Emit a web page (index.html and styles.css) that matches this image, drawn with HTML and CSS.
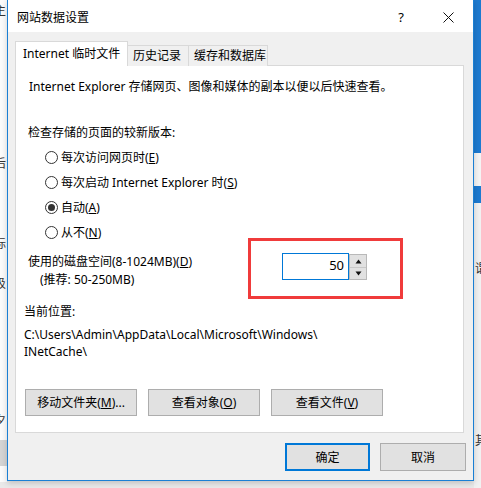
FILE: index.html
```html
<!DOCTYPE html>
<html lang="zh-CN">
<head>
<meta charset="utf-8">
<title>网站数据设置</title>
<link rel="stylesheet" href="styles.css">
</head>
<body>
<div class="desktop">
  <div class="bgwin bg-left">
    <span class="bgchar c1">主</span>
    <span class="bgchar c2">后</span>
    <span class="bgchar c3">标</span>
    <span class="bgchar c4">汲</span>
    <span class="bgchar c5">夕</span>
    <div class="bg-left-bar"></div>
  </div>
  <div class="bgwin bg-right">
    <div class="blue b1"></div>
    <div class="gap"></div>
    <div class="blue b2"></div>
    <span class="bgchar r1">谓</span>
    <span class="bgchar r2">其</span>
  </div>

  <div class="dialog">
    <div class="titlebar">
      <span class="title">网站数据设置</span>
      <span class="help">?</span>
      <span class="close"><svg width="11" height="11" viewBox="0 0 11 11"><path d="M0.5 0.5 L10.5 10.5 M10.5 0.5 L0.5 10.5" stroke="#111" stroke-width="1" fill="none"/></svg></span>
    </div>
    <div class="content">
      <div class="tabs">
        <div class="tab active">Internet 临时文件</div>
        <div class="tab">历史记录</div>
        <div class="tab">缓存和数据库</div>
      </div>
      <div class="panel">
        <p class="intro">Internet Explorer 存储网页、图像和媒体的副本以便以后快速查看。</p>
        <p class="check-label">检查存储的页面的较新版本:</p>
        <div class="radios">
          <div class="radio-row"><span class="radio"></span><span>每次访问网页时(<u>E</u>)</span></div>
          <div class="radio-row"><span class="radio"></span><span>每次启动 Internet Explorer 时(<u>S</u>)</span></div>
          <div class="radio-row"><span class="radio checked"></span><span>自动(<u>A</u>)</span></div>
          <div class="radio-row"><span class="radio"></span><span>从不(<u>N</u>)</span></div>
        </div>
        <div class="disk-row">
          <div class="disk-label">
            <div>使用的磁盘空间(8-1024MB)(<u>D</u>)</div>
            <div class="rec">(推荐: 50-250MB)</div>
          </div>
          <div class="spin">
            <div class="spin-input">50</div>
            <div class="spin-btns">
              <span class="spin-btn"><svg width="7" height="5" viewBox="0 0 7 5"><path d="M3.5 0.5 L6.5 4.5 L0.5 4.5 Z" fill="#111"/></svg></span>
              <span class="spin-btn"><svg width="7" height="5" viewBox="0 0 7 5"><path d="M0.5 0.5 L6.5 0.5 L3.5 4.5 Z" fill="#111"/></svg></span>
            </div>
          </div>
        </div>
        <p class="loc-label">当前位置:</p>
        <p class="path">C:\Users\Admin\AppData\Local\Microsoft\Windows\<br>INetCache\</p>
        <div class="actions">
          <button class="btn">移动文件夹(<u>M</u>)...</button>
          <button class="btn">查看对象(<u>O</u>)</button>
          <button class="btn">查看文件(<u>V</u>)</button>
        </div>
        <div class="highlight"></div>
      </div>
      <div class="footer">
        <button class="btn dlg-btn primary">确定</button>
        <button class="btn dlg-btn">取消</button>
      </div>
    </div>
  </div>
</div>
</body>
</html>
```
FILE: styles.css
```css
* { box-sizing: border-box; }
html, body { margin: 0; padding: 0; }
body {
  width: 481px;
  height: 488px;
  overflow: hidden;
  background: #e9e9e9;
  font-family: "Noto Sans", "Noto Sans CJK SC", sans-serif;
  font-size: 12px;
  color: #000;
}
p { margin: 0; }
u { text-decoration: underline; text-underline-offset: 1px; }

.desktop {
  position: relative;
  width: 481px;
  height: 488px;
  overflow: hidden;
}

/* background windows */
.bgwin { position: absolute; overflow: hidden; }
.bg-left {
  left: 0; top: 0;
  width: 8px; height: 482px;
  background: #fbfbfb;
  border-right: 1px solid #e4e4e4;
}
.bg-left-bar {
  position: absolute;
  left: 0; top: 440px;
  width: 8px; height: 26px;
  background: #d4d4d4;
}
.bgchar {
  position: absolute;
  font-family: "Noto Sans CJK SC", sans-serif;
  font-size: 12px;
  line-height: 14px;
  color: #333;
}
.c1 { left: -6px; top: 3px; }
.c2 { left: -6px; top: 156px; }
.c3 { left: -6px; top: 236px; }
.c4 { left: -6px; top: 276px; }
.c5 { left: -6px; top: 413px; }

.bg-right {
  left: 474px; top: 0;
  width: 7px; height: 488px;
  background: #f1f1f1;
}
.blue { background: #1d7ad0; width: 7px; }
.b1 { height: 153px; }
.gap { height: 33px; background: #f4f4f4; }
.b2 { height: 17px; }
.r1 { left: 1px; top: 261px; }
.r2 { left: 1px; top: 433px; }

/* dialog */
.dialog {
  position: absolute;
  left: 7px; top: -1px;
  width: 467px;
  height: 482px;
  border: 1px solid #1a7fd4;
  background: #f0f0f0;
  box-shadow: 0 2px 6px rgba(0,0,0,0.18);
  display: flex;
  flex-direction: column;
}
.titlebar {
  height: 32px;
  background: #fff;
  display: flex;
  align-items: center;
  padding-left: 9px;
  padding-top: 1px;
}
.title {
  flex: 1;
  font-family: "Noto Sans CJK SC", sans-serif;
  font-size: 12px;
}
.help {
  width: 10px;
  font-size: 13px;
  margin-right: 37px;
  text-align: center;
}
.close {
  display: flex;
  margin-right: 19px;
  margin-top: 1px;
}

.content {
  flex: 1;
  display: flex;
  flex-direction: column;
  padding: 9px 0 0 7px;
}

.tabs {
  display: flex;
  align-items: flex-end;
  height: 25px;
  position: relative;
  z-index: 2;
  margin-bottom: -1px;
}
.tab {
  height: 21px;
  line-height: 19px;
  padding: 0 6px;
  border: 1px solid #d9d9d9;
  border-bottom: none;
  background: #f0f0f0;
  white-space: nowrap;
  margin-left: -1px;
}
.tab.active {
  height: 25px;
  line-height: 23px;
  background: #fff;
  margin-left: 0;
  padding: 0 8px 0 7px;
  width: 113px;
  z-index: 3;
}
.tab:nth-child(2) { width: 62px; padding-left: 5px; }
.tab:nth-child(3) { width: 80px; padding-left: 5px; }

.panel {
  position: relative;
  width: 449px;
  height: 368px;
  background: #fff;
  border: 1px solid #d9d9d9;
  padding: 12px 0 0 8px;
  line-height: 17px;
}
.intro { margin-left: 5px; }
.check-label { margin-left: 4px; margin-top: 29px; }

.radios {
  margin-top: 4px;
  margin-left: 21px;
}
.radio-row {
  display: flex;
  align-items: center;
  height: 25px;
}
.radio {
  width: 13px; height: 13px;
  border: 1px solid #333;
  border-radius: 50%;
  background: #fff;
  margin-right: 3px;
  display: flex;
  align-items: center;
  justify-content: center;
}
.radio.checked::after {
  content: "";
  width: 7px; height: 7px;
  border-radius: 50%;
  background: #333;
}

.disk-row {
  display: grid;
  grid-template-columns: 258px auto;
  margin-top: 8px;
  height: 36px;
}
.disk-label { margin-left: 4px; line-height: 18px; }
.rec { margin-left: 12px; }
.spin { display: flex; align-items: flex-start; }
.spin-input {
  width: 67px;
  height: 27px;
  border: 1px solid #0078d7;
  background: #fff;
  text-align: right;
  padding-right: 4px;
  line-height: 23px;
  font-size: 13px;
}
.spin-btns {
  display: flex;
  flex-direction: column;
  margin-top: 1px;
  border: 1px solid #b9b9b9;
  background: #e1e1e1;
}
.spin-btn {
  width: 16px;
  height: 12px;
  display: flex;
  align-items: center;
  justify-content: center;
}
.spin-btn + .spin-btn { border-top: 1px solid #c8c8c8; }

.loc-label { margin-top: 14px; }
.path { margin-top: 7px; line-height: 16.5px; }

.actions {
  display: flex;
  gap: 11px;
  margin-top: 29px;
  margin-left: 1px;
}
.btn {
  font-family: "Noto Sans", "Noto Sans CJK SC", sans-serif;
  font-size: 12px;
  color: #000;
  height: 27px;
  width: 112px;
  background: #e1e1e1;
  border: 1px solid #adadad;
  padding: 0;
  margin: 0;
  line-height: 25px;
}

.highlight {
  position: absolute;
  left: 232px;
  top: 172px;
  width: 155px;
  height: 61px;
  border: 3px solid #f03b3b;
  pointer-events: none;
}

.footer {
  display: flex;
  justify-content: flex-end;
  gap: 10px;
  margin-top: 10px;
  padding-right: 7px;
}
.dlg-btn { width: 86px; height: 28px; }
.dlg-btn.primary {
  border: 2px solid #0078d7;
  width: 85px;
}
```
